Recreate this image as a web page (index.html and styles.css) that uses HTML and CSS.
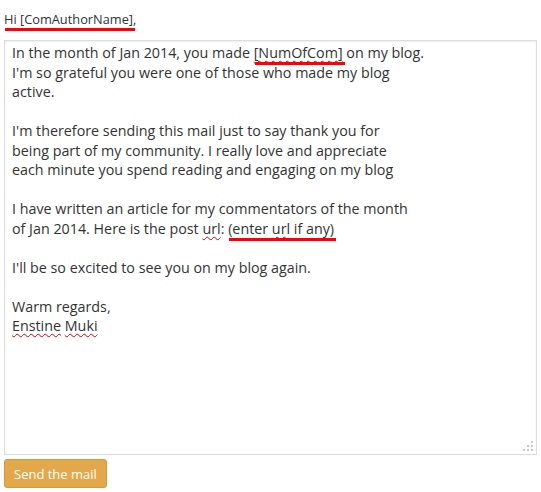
FILE: index.html
```html
<!DOCTYPE html>
<html>
<head>
<meta charset="utf-8">
<link rel="stylesheet" href="styles.css">
</head>
<body>
<div class="page">
  <div class="greeting"><span class="mark">Hi [ComAuthorName]</span>,</div>
  <div class="editor">
    <div class="text">In the month of Jan 2014, you made <span class="mark"><span class="sp">[NumOfCom]</span></span> on my blog.
I'm so grateful you were one of those who made my blog
active.

I'm therefore sending this mail just to say thank you for
being part of my community. I really love and appreciate
each minute you spend reading and engaging on my blog

I have written an article for my commentators of the month
of Jan 2014. Here is the post <span class="sp">url</span>: <span class="mark">(enter <span class="sp">url</span> if any)</span>

I'll be so excited to see you on my blog again.

Warm regards,
<span class="sp">Enstine</span> <span class="sp">Muki</span></div>
    <svg class="grip" width="12" height="12" viewBox="0 0 12 12">
      <rect x="9" y="1" width="2" height="2" fill="#c8c8c8"/>
      <rect x="5" y="5" width="2" height="2" fill="#c8c8c8"/>
      <rect x="9" y="5" width="2" height="2" fill="#c8c8c8"/>
      <rect x="1" y="9" width="2" height="2" fill="#c8c8c8"/>
      <rect x="5" y="9" width="2" height="2" fill="#c8c8c8"/>
      <rect x="9" y="9" width="2" height="2" fill="#c8c8c8"/>
    </svg>
  </div>
  <button class="send">Send the mail</button>
</div>
</body>
</html>
```
FILE: styles.css
```css
html, body {
  margin: 0;
  padding: 0;
  background: #ffffff;
}
.page {
  padding: 10px 4px 0 4px;
  font-family: "Open Sans", sans-serif;
  color: #333333;
}
.greeting {
  font-size: 12.8px;
  line-height: 18px;
  height: 30px;
}
.mark {
  position: relative;
}
.mark::after {
  content: "";
  position: absolute;
  left: 1px;
  right: -2px;
  bottom: -3px;
  height: 3px;
  background: #ff0000;
}
.editor {
  position: relative;
  height: 413px;
  border: 1px solid #dddddd;
  box-shadow: inset 0 1px 2px rgba(0,0,0,0.07);
}
.text {
  white-space: pre-wrap;
  font-size: 14.3px;
  line-height: 19.5px;
  padding: 2px 7px;
}
.sp {
  text-decoration: underline wavy #e00000;
  text-decoration-thickness: 1px;
  text-underline-offset: 2px;
}
.grip {
  position: absolute;
  right: 2px;
  bottom: 2px;
}
.send {
  margin-top: 4px;
  height: 29px;
  padding: 0 9px;
  background: #e2a84b;
  border: 1px solid #d49a3c;
  border-radius: 3px;
  color: #ffffff;
  font-family: "Open Sans", sans-serif;
  font-size: 13px;
}
```
